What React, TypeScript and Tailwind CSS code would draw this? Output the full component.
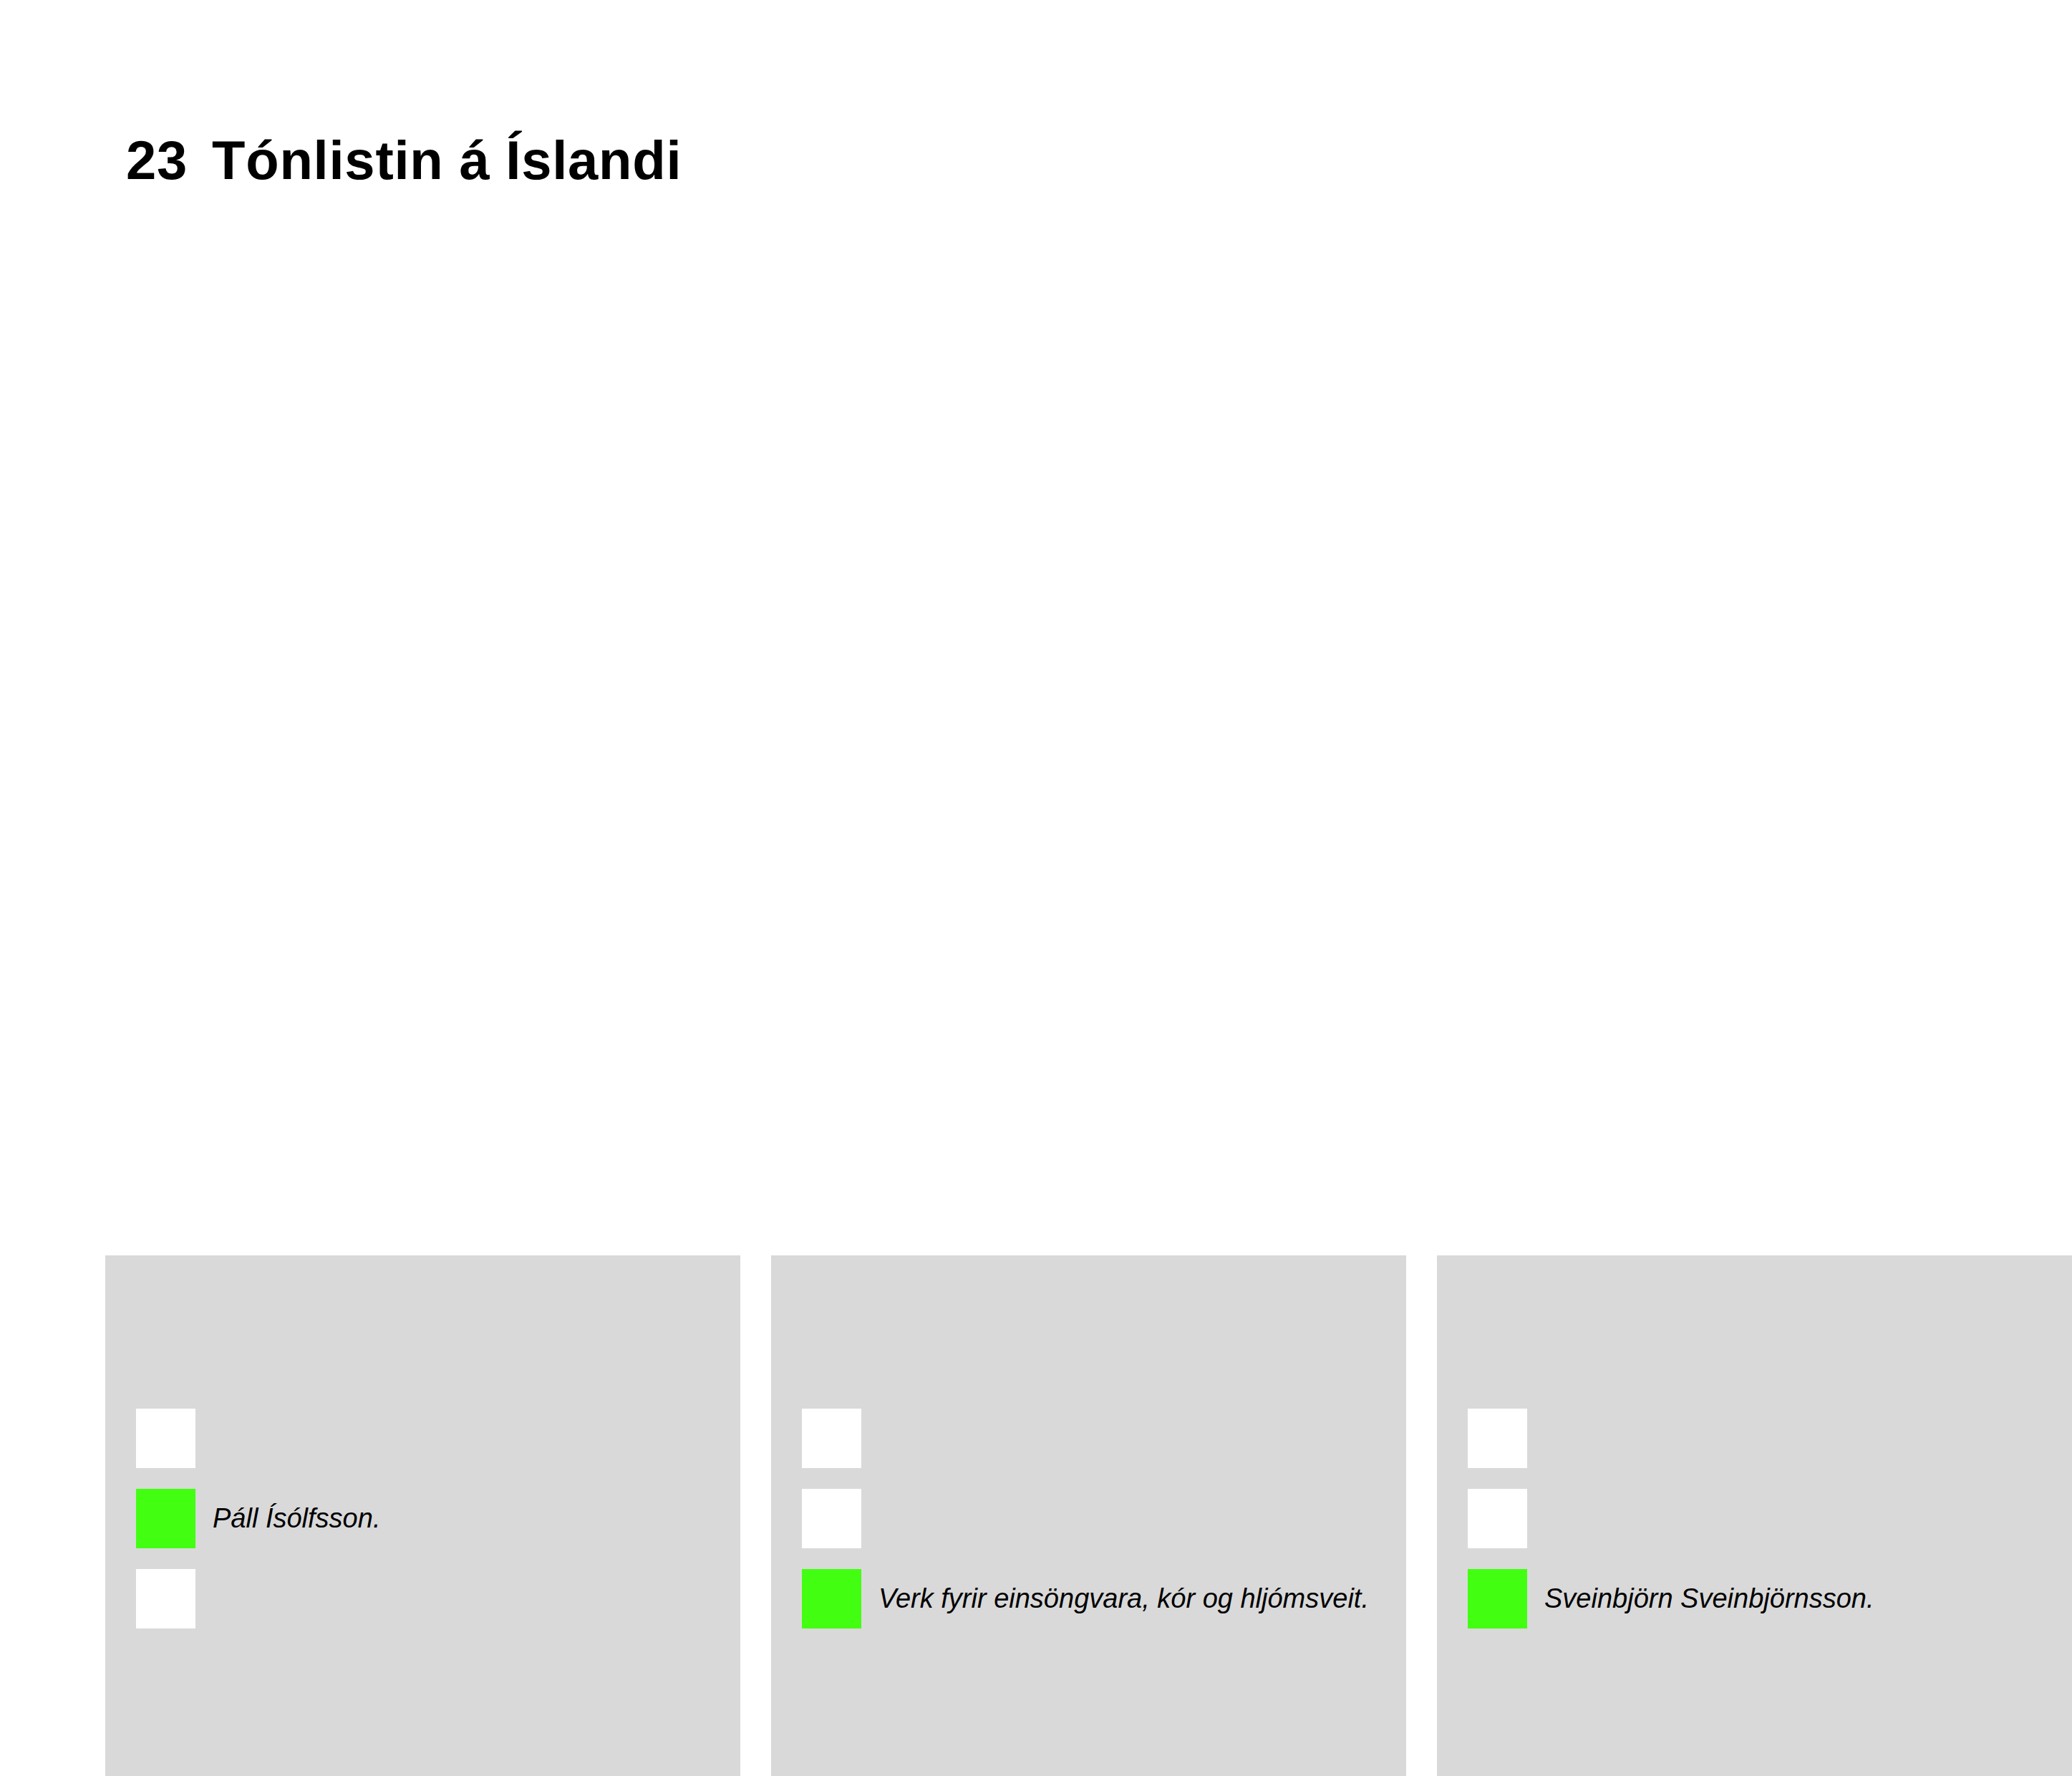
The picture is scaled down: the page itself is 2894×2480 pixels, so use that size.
const panels = [
  { answer: 1, text: "Páll Ísólfsson." },
  { answer: 2, text: "Verk fyrir einsöngvara, kór og hljómsveit." },
  { answer: 2, text: "Sveinbjörn Sveinbjörnsson." },
];

function OptionRow({ active, label }: { active: boolean; label?: string }) {
  return (
    <div className="flex items-center gap-[24px]">
      <div className={active ? "w-[83px] h-[83px] shrink-0 bg-[#42ff12]" : "w-[83px] h-[83px] shrink-0 bg-white"} />
      {active && label && <span className="text-[38px] italic text-black whitespace-nowrap">{label}</span>}
    </div>
  );
}

export default function App() {
  return (
    <div className="w-[2894px] h-[2480px] overflow-hidden bg-white font-['Liberation_Sans',Arial,sans-serif]">
      {/* Header */}
      <div className="pl-[176px] pt-[186px] flex gap-[34px] text-[76px] font-bold leading-none tracking-[0.01em] text-black">
        <span>23</span>
        <span>Tónlistin á Íslandi</span>
      </div>

      {/* Answer cards */}
      <div className="mt-[1491px] pl-[147px] flex gap-[43px]">
        {panels.map((p, i) => (
          <div key={i} className="w-[887px] h-[734px] shrink-0 bg-[#d9d9d9] flex flex-col justify-center gap-[29px] pl-[43px]">
            {[0, 1, 2].map((row) => (
              <OptionRow key={row} active={row === p.answer} label={p.text} />
            ))}
          </div>
        ))}
      </div>
    </div>
  );
}
